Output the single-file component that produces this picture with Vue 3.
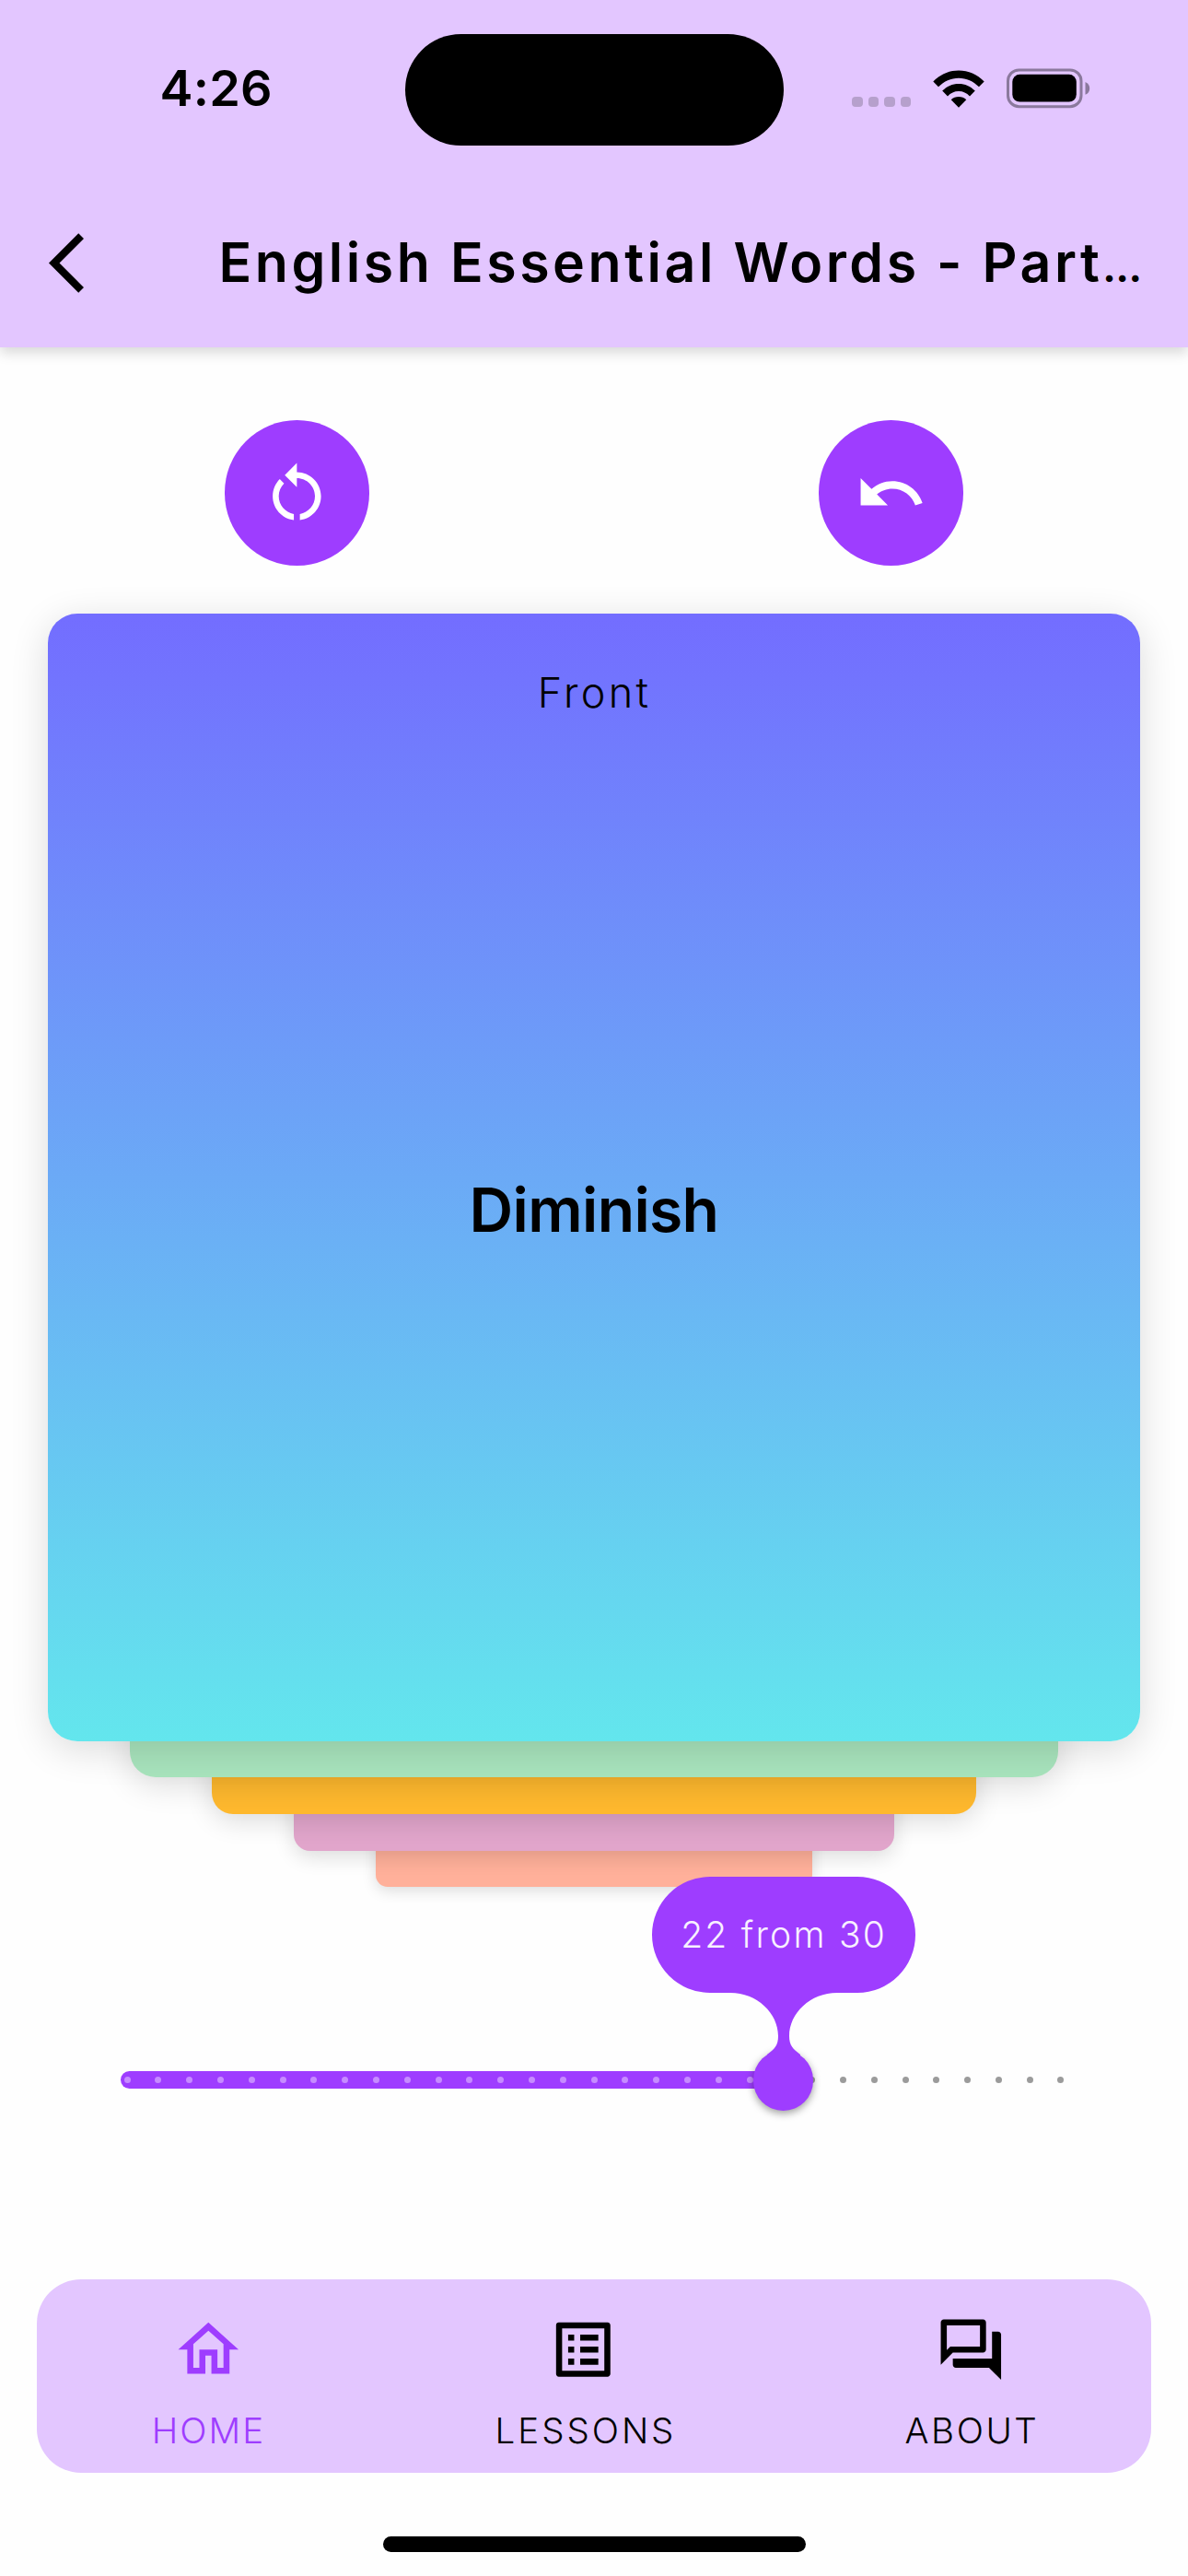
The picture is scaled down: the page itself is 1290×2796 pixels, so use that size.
<script setup>
const total = 30
const learned = 22
const ticks = Array.from({ length: total + 1 }, (_, i) => i < learned)
const layers = ['mint', 'amber', 'orchid', 'salmon']
const tabs = [
  {
    id: 'home',
    label: 'HOME',
    icon: 'M12 5.69l5 4.5V18h-2v-6H9v6H7v-7.81l5-4.5M12 3L2 12h3v8h6v-6h2v6h6v-8h3L12 3z',
  },
  {
    id: 'lessons',
    label: 'LESSONS',
    icon: 'M19 5v14H5V5h14m1.1-2H3.9c-.5 0-.9.4-.9.9v16.2c0 .4.4.9.9.9h16.2c.4 0 .9-.5.9-.9V3.9c0-.5-.5-.9-.9-.9zM11 7h6v2h-6V7zm0 4h6v2h-6v-2zm0 4h6v2h-6v-2zM7 7h2v2H7V7zm0 4h2v2H7v-2zm0 4h2v2H7v-2z',
  },
  {
    id: 'about',
    label: 'ABOUT',
    icon: 'M15 4v7H5.17L4 12.17V4h11m1-2H3c-.55 0-1 .45-1 1v14l4-4h10c.55 0 1-.45 1-1V3c0-.55-.45-1-1-1zm5 4h-2v9H6v2c0 .55.45 1 1 1h11l4 4V7c0-.55-.45-1-1-1z',
  },
]
</script>

<template>
  <div class="screen">
    <header class="header">
      <div class="status">
        <span class="time">4:26</span>
        <div class="island"></div>
        <div class="indicators">
          <div class="cell"><i v-for="n in 4" :key="n"></i></div>
          <svg class="wifi" viewBox="0 0 56 41">
            <path d="M0.3 12.4C8 4.6 17.5 0.4 28 0.4s20 4.2 27.7 12L50 18.3C43.8 12.1 36.5 8.7 28 8.7S12.2 12.1 6 18.3z" />
            <path d="M10.2 22.6C15.3 17.5 21 14.9 28 14.9s12.7 2.6 17.8 7.7l-5.8 5.8C36.6 25 32.8 23.1 28 23.1S19.4 25 16 28.4z" />
            <path d="M19.7 32.2C22 30 24.8 28.9 28 28.9s6 1.1 8.3 3.3L28 40.7z" />
          </svg>
          <svg class="battery" viewBox="0 0 91 44">
            <rect x="1.5" y="1.9" width="79.5" height="39.8" rx="12" fill="none" stroke="#8b799d" stroke-width="3" />
            <rect x="6.3" y="6.8" width="69.5" height="29.8" rx="8" />
            <path d="M85.5 15c3 1.3 4.7 3.8 4.7 6.9s-1.7 5.6-4.7 6.9z" fill="#8b799d" />
          </svg>
        </div>
      </div>
      <div class="appbar">
        <svg class="back" viewBox="0 0 11.67 19.8">
          <path d="M11.67 1.77L9.9 0 0 9.9l9.9 9.9 1.77-1.77L3.54 9.9z" />
        </svg>
        <h1>English Essential Words - Part<span class="more">…</span></h1>
      </div>
    </header>

    <section class="actions">
      <button type="button">
        <svg viewBox="0 0 24 24">
          <path d="M12 5V2L8 6l4 4V7c3.31 0 6 2.69 6 6 0 2.97-2.17 5.43-5 5.91v2.02c3.95-.49 7-3.85 7-7.93 0-4.42-3.58-8-8-8zM6 13c0-1.65.67-3.15 1.76-4.24L6.34 7.34C4.9 8.79 4 10.79 4 13c0 4.08 3.05 7.44 7 7.93v-2.02c-2.83-.48-5-2.94-5-5.91z" />
        </svg>
      </button>
      <button type="button">
        <svg viewBox="0 0 24 24">
          <path d="M12.5 8c-2.65 0-5.05.99-6.9 2.6L2 7v9h9l-3.62-3.62c1.39-1.16 3.16-1.88 5.12-1.88 3.54 0 6.55 2.31 7.6 5.5l2.37-.78C21.08 11.03 17.15 8 12.5 8z" />
        </svg>
      </button>
    </section>

    <section class="deck">
      <article class="card">
        <span class="side">Front</span>
        <h2>Diminish</h2>
      </article>
      <div v-for="layer in layers" :key="layer" class="layer" :class="layer"></div>
    </section>

    <section class="slider">
      <div class="track"></div>
      <div class="ticks">
        <i v-for="(done, i) in ticks" :key="i" :class="{ done }"></i>
      </div>
      <div class="knob"></div>
      <div class="bubble">
        <svg viewBox="0 0 286 196">
          <path d="M63 0H223a63 63 0 0 1 0 126H201C172 126 149 148 149 173C149 183 153 187 161 193V196H125V193C133 187 137 183 137 173C137 148 114 126 85 126H63A63 63 0 0 1 63 0z" />
        </svg>
        <span>{{ learned }} from {{ total }}</span>
      </div>
    </section>

    <nav class="tabs">
      <a v-for="tab in tabs" :key="tab.id" :class="tab.id">
        <svg viewBox="0 0 24 24"><path :d="tab.icon" /></svg>
        <span>{{ tab.label }}</span>
      </a>
    </nav>
    <div class="home-bar"></div>
  </div>
</template>

<style>
body {
  background: #fefefe;
}
</style>

<style scoped>
.screen {
  box-sizing: border-box;
  width: 1290px;
  height: 2796px;
  overflow: hidden;
  display: flex;
  flex-direction: column;
  background: #fefefe;
  color: #000;
  font-family: Inter, "Liberation Sans", sans-serif;
}
svg {
  display: block;
  flex: none;
}
.header {
  height: 377px;
  flex: none;
  background: #e3c6ff;
  box-shadow: 0 6px 13px rgba(0, 0, 0, 0.15);
}
.status {
  height: 194px;
  display: flex;
  align-items: flex-start;
}
.time {
  width: 266.4px;
  margin: 63px 0 0 173.6px;
  font-size: 54px;
  font-weight: 580;
  line-height: 65px;
  letter-spacing: 0.2px;
}
.island {
  width: 411px;
  height: 121px;
  margin-top: 36.7px;
  border-radius: 61px;
  background: #000;
}
.indicators {
  display: flex;
  align-items: flex-start;
  margin: 74px 0 0 74.5px;
}
.cell {
  display: flex;
  gap: 6px;
  margin: 31px 24px 0 0;
}
.cell i {
  width: 11.5px;
  height: 11.3px;
  border-radius: 4px;
  background: #b6a0cc;
}
.wifi {
  width: 56px;
  height: 41px;
  margin: 1.5px 24px 0 0;
}
.battery {
  width: 91px;
  height: 44px;
}
.appbar {
  height: 183px;
  display: flex;
  align-items: center;
}
.back {
  width: 38px;
  height: 65px;
  margin: 0 146.5px 0 53px;
}
h1 {
  margin: 0;
  padding-bottom: 3px;
  font-size: 59px;
  font-weight: 590;
  line-height: 71px;
  letter-spacing: 3.55px;
  white-space: nowrap;
}
.more {
  font-size: 40px;
  font-weight: 800;
  line-height: 1;
  letter-spacing: 0;
}
.actions {
  flex: none;
  height: 157.5px;
  margin-top: 79.2px;
  display: flex;
  justify-content: space-around;
}
.actions button {
  width: 157.5px;
  height: 157.5px;
  padding: 0;
  border: 0;
  border-radius: 50%;
  display: flex;
  align-items: center;
  justify-content: center;
  background: #9e3dff;
}
.actions svg {
  width: 78.7px;
  height: 78.7px;
  fill: #fff;
}
.deck {
  flex: none;
  margin-top: 52.8px;
  display: flex;
  flex-direction: column;
  align-items: center;
}
.card {
  position: relative;
  z-index: 5;
  width: 1185.4px;
  height: 1223.3px;
  border-radius: 32px;
  display: flex;
  flex-direction: column;
  align-items: center;
  background: linear-gradient(#736dff, #63e6ed);
  box-shadow: 0 9px 42px rgba(0, 0, 0, 0.14);
}
.side {
  margin-top: 59px;
  padding-left: 1px;
  font-size: 45px;
  font-weight: 300;
  line-height: 54px;
  letter-spacing: 3.3px;
}
h2 {
  margin: 494px 0 0;
  font-size: 66px;
  font-weight: 580;
  line-height: 80px;
  letter-spacing: -0.65px;
}
.layer {
  position: relative;
  height: 139.6px;
  margin-top: -100px;
}
.mint {
  z-index: 4;
  width: 1007.6px;
  border-radius: 0 0 28px 28px;
  background: #a8e4bd;
  box-shadow: 0 8px 35px rgba(0, 0, 0, 0.14);
}
.amber {
  z-index: 3;
  width: 829.6px;
  border-radius: 0 0 23px 23px;
  background: #ffb92e;
  box-shadow: 0 7px 29px rgba(0, 0, 0, 0.14);
}
.orchid {
  z-index: 2;
  width: 651.5px;
  border-radius: 0 0 18px 18px;
  background: #e1a5cb;
  box-shadow: 0 6px 22px rgba(0, 0, 0, 0.14);
}
.salmon {
  z-index: 1;
  width: 474px;
  border-radius: 0 0 13px 13px;
  background: #ffb09a;
  box-shadow: 0 4px 16px rgba(0, 0, 0, 0.14);
}
.slider {
  flex: none;
  position: relative;
  z-index: 6;
  width: 1028px;
  height: 19.4px;
  margin: 199.9px 0 0 131.2px;
}
.track {
  width: 719px;
  height: 19.4px;
  border-radius: 10px;
  background: #9e3dff;
}
.ticks {
  position: absolute;
  top: 6.4px;
  left: 3.4px;
  width: 1021px;
  display: flex;
  justify-content: space-between;
}
.ticks i {
  width: 7px;
  height: 7px;
  border-radius: 50%;
  background: #9b9b9b;
}
.ticks .done {
  background: #c68bff;
}
.knob {
  position: absolute;
  top: -22.8px;
  left: 686.8px;
  width: 65.4px;
  height: 65.4px;
  border-radius: 50%;
  background: #9e3dff;
  box-shadow: 0 3px 8px rgba(0, 0, 0, 0.38);
}
.bubble {
  position: absolute;
  top: -210.8px;
  left: 576.5px;
  width: 286px;
  height: 126px;
  display: flex;
  justify-content: center;
}
.bubble svg {
  position: absolute;
  top: 0;
  left: 0;
  width: 286px;
  height: 196px;
  fill: #9e3dff;
}
.bubble span {
  position: relative;
  margin-top: 39px;
  padding-left: 1px;
  color: #f8f0ff;
  font-size: 39px;
  font-weight: 300;
  line-height: 47px;
  letter-spacing: 2.25px;
  white-space: nowrap;
}
.tabs {
  flex: none;
  box-sizing: border-box;
  width: 1210.6px;
  height: 210px;
  margin: 206.6px 0 0 39.7px;
  padding-left: 86.8px;
  border-radius: 48px;
  display: flex;
  background: #e3c6ff;
}
.tabs a {
  width: 200px;
  display: flex;
  flex-direction: column;
  align-items: center;
}
.tabs svg {
  width: 78.6px;
  height: 78.6px;
  margin-top: 36.5px;
}
.tabs span {
  margin-top: 25.4px;
  font-size: 38.5px;
  font-weight: 300;
  line-height: 47px;
}
.tabs path {
  fill: currentColor;
}
.home {
  color: #9e3dff;
}
.home span {
  letter-spacing: 2.03px;
}
.lessons {
  margin: 0 221px 0 207px;
}
.lessons span {
  padding-left: 5px;
  letter-spacing: 2.97px;
}
.about span {
  padding-left: 2px;
  letter-spacing: 2.6px;
}
.home-bar {
  flex: none;
  width: 459px;
  height: 16.4px;
  margin: 69.2px auto 0;
  border-radius: 9px;
  background: #000;
}
</style>
